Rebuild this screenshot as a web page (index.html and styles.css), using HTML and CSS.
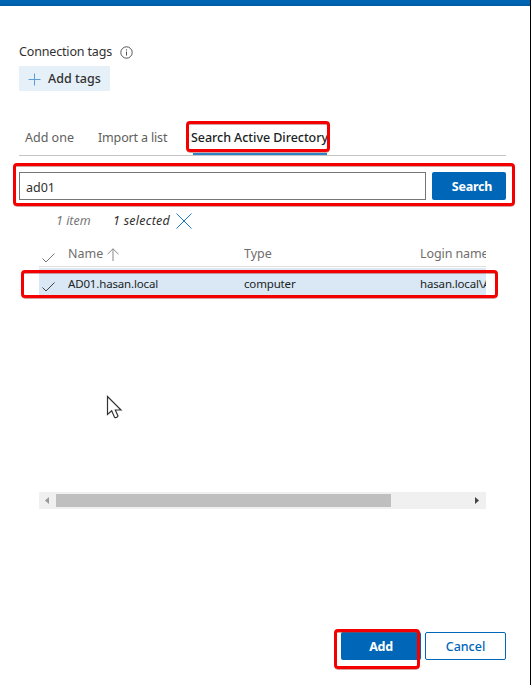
FILE: index.html
```html
<!DOCTYPE html>
<html lang="en">
<head>
<meta charset="utf-8">
<title>Add connections</title>
<link rel="stylesheet" href="styles.css">
</head>
<body>
<div class="panel">
  <div class="topbar"></div>
  <main class="content">
    <div class="label-row">
      <span class="label">Connection tags</span>
      <svg class="info" width="13" height="13" viewBox="0 0 13 13"><circle cx="6.5" cy="6.5" r="5.7"/><path d="M6.5 5.5V9.6M6.5 3.3V4.5"/></svg>
    </div>
    <button class="add-tags">
      <svg width="13" height="13" viewBox="0 0 13 13"><path d="M6.5 .5V12.5M.5 6.5H12.5"/></svg>
      <span>Add tags</span>
    </button>
    <nav class="tabs">
      <span class="tab tab-one">Add one</span>
      <span class="tab tab-list">Import a list</span>
      <span class="tab tab-search">Search Active Directory<i class="mark mark-tab"></i></span>
    </nav>
    <div class="search">
      <div class="field">ad01</div>
      <button class="primary search-btn">Search</button>
      <i class="mark mark-search"></i>
    </div>
    <div class="summary">
      <em class="count">1 item</em>
      <em class="selected">1 selected</em>
      <svg width="16" height="16" viewBox="0 0 16 16"><path d="M.5 .5L15.5 15.5M15.5 .5L.5 15.5"/></svg>
    </div>
    <div class="table">
      <div class="row head">
        <svg class="check" width="13" height="10" viewBox="0 0 13 10"><path d="M.5 5.5L4 9L12.5 .5"/></svg>
        <span class="cell"><span class="name">Name</span><svg class="sort" width="12" height="13" viewBox="0 0 12 13"><path d="M6 13V.8M.5 6.2L6 .8L11.5 6.2"/></svg></span>
        <span class="cell type">Type</span>
        <span class="cell login">Login name</span>
      </div>
      <div class="row item">
        <svg class="check" width="13" height="10" viewBox="0 0 13 10"><path d="M.5 5.5L4 9L12.5 .5"/></svg>
        <span class="cell host">AD01.hasan.local</span>
        <span class="cell comp">computer</span>
        <span class="cell dom">hasan.local\A</span>
      </div>
      <i class="mark mark-row"></i>
    </div>
    <div class="scrollbar">
      <svg class="arrow dim" width="17" height="17" viewBox="0 0 17 17"><path d="M10 5V12L6 8.5Z"/></svg>
      <div class="track"><div class="thumb"></div></div>
      <svg class="arrow" width="17" height="17" viewBox="0 0 17 17"><path d="M6 5V12L10 8.5Z"/></svg>
    </div>
    <footer class="actions">
      <button class="primary add">Add</button>
      <button class="cancel">Cancel</button>
      <i class="mark mark-add"></i>
    </footer>
  </main>
  <svg class="cursor" width="17" height="25" viewBox="0 0 17 25"><path d="M1.5 1.5V19.5L5.7 15.8L8.5 22.2Q10.5 23.5 12 21L9.3 15H15Z"/></svg>
</div>
</body>
</html>
```
FILE: styles.css
```css
* { box-sizing: border-box; }
body {
  margin: 0;
  background: #fff;
  color: #323130;
  font: 13px/16px "Noto Sans", "Open Sans", sans-serif;
}
button { font: inherit; border: 0; padding: 0; margin: 0; }
svg { display: block; fill: none; flex: none; }
.panel {
  position: relative;
  width: 531px;
  height: 685px;
  border-right: 1px solid #000;
  overflow: hidden;
}
.topbar { height: 6px; background: linear-gradient(#0065b3, #0065b3 3px, #005aa3); }
.content { padding: 38px 24px 0 19px; }
.label-row { display: flex; align-items: center; height: 16px; }
.label { font-size: 12.5px; letter-spacing: -.16px; }
.info { margin-left: 8px; stroke: #555; }
.add-tags {
  display: flex;
  align-items: center;
  width: 91px;
  height: 25px;
  margin-top: 6px;
  padding-left: 9px;
  background: #e5f0f9;
  color: #323130;
  font-size: 12.5px;
  font-weight: 500;
}
.add-tags svg { stroke: #5b9fd6; margin: 2px 7px 0 0; }
.tabs {
  display: flex;
  height: 35px;
  margin-top: 30px;
  padding: 9px 0 0 6px;
  border-bottom: 1px solid #c4c4c4;
  font-size: 12.5px;
  line-height: 16px;
  white-space: nowrap;
  color: #605e5c;
}
.tab { position: relative; height: 25px; }
.tab-one { width: 73px; }
.tab-list { width: 93px; letter-spacing: -.16px; }
.tab-search { width: 140px; color: #201f1e; font-weight: 500; letter-spacing: -.05px; }
.tab-search::after {
  content: "";
  position: absolute;
  left: 2px;
  bottom: 0;
  width: 134px;
  height: 2px;
  background: #2f83c5;
}
.mark {
  position: absolute;
  border: 3px solid #f40000;
  border-radius: 4px;
  box-shadow: 0 1px 0 -.5px #a44, inset 0 .5px 0 #a44;
  pointer-events: none;
}
.mark-tab { left: -5px; top: -9px; width: 144px; height: 31px; }
.search { position: relative; display: flex; gap: 6px; height: 28px; margin-top: 16px; }
.field {
  width: 407px;
  border: 1px solid #767676;
  padding: 7px 6px 0;
  font-size: 12.5px;
}
.primary {
  background: #0067b8;
  color: #fff;
  font-size: 12.5px;
  font-weight: 700;
  letter-spacing: -.25px;
  padding-top: 1px;
  border-radius: 2px;
}
.search-btn { width: 74px; padding-left: 6px; }
.mark-search { left: -6px; top: -9px; width: 502px; height: 43px; }
.summary { display: flex; align-items: center; height: 16px; margin: 13px 0 0 37px; font-size: 12.5px; }
.count { width: 57px; color: #777; }
.selected { width: 63px; letter-spacing: .25px; }
.summary svg { stroke: #1878c8; margin-top: -1px; }
.table { position: relative; width: 447px; height: 260px; margin: 15px 0 0 20px; }
.row {
  display: grid;
  grid-template-columns: 29px 176px 176px 66px;
  overflow: hidden;
  white-space: nowrap;
}
.cell { display: flex; overflow: hidden; }
.check { margin: 7px 0 0 3px; stroke: #777; }
.head { height: 23px; border-bottom: 1px solid #e1dfdd; color: #706e6c; font-size: 12.5px; margin-bottom: 1px; padding-top: 2px; }
.head .cell { line-height: 16px; }
.login { letter-spacing: -.1px; }
.sort { stroke: #888; margin: 2px 0 0 4px; }
.item { height: 28px; background: #dae7f5; color: #201f1e; font-size: 11.5px; line-height: 32px; letter-spacing: -.16px; }
.item .check { margin-top: 14px; stroke: #444; }
.mark-row { left: -18px; top: 26px; width: 477px; height: 28px; }
.scrollbar { display: flex; width: 447px; height: 17px; margin: -12px 0 0 20px; background: #f0f0f0; }
.arrow { fill: #444; }
.dim { fill: #999; }
.track { flex: 1; padding: 2px 0; }
.thumb { width: 335px; height: 13px; background: #bfbfbf; }
.actions { position: relative; display: flex; justify-content: flex-end; gap: 4px; height: 28px; margin-top: 123px; width: 487px; }
.add { width: 80px; }
.cancel { width: 81px; padding-top: 1px; border: 1px solid #0067b8; border-radius: 2px; background: #fff; color: #0067b8; font-size: 12.5px; font-weight: 500; }
.mark-add { left: 315px; top: -3px; width: 86px; height: 40px; }
.cursor { position: absolute; left: 106px; top: 395px; fill: #fff; stroke: #333; stroke-width: 1.2; }
```
